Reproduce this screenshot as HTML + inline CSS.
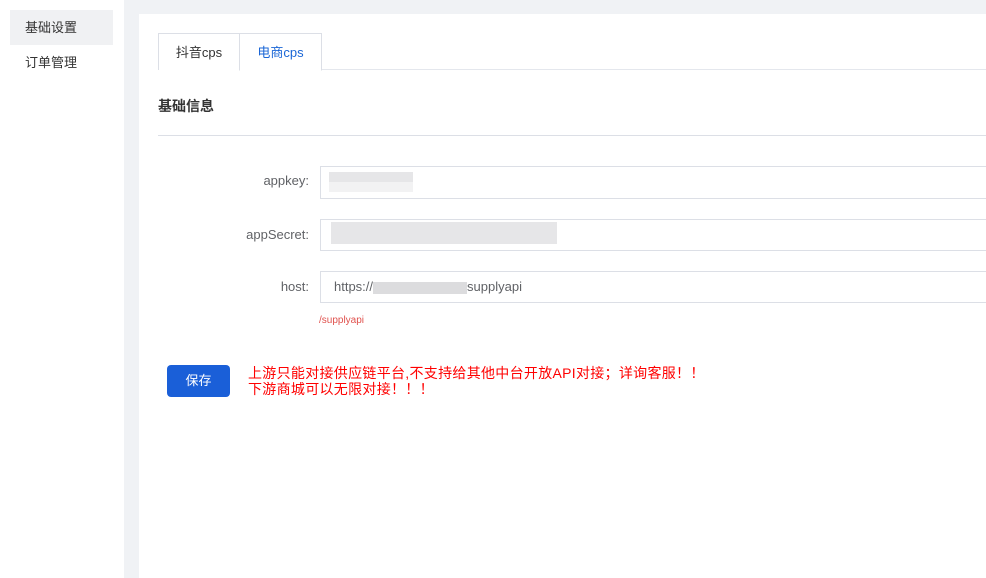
<!DOCTYPE html>
<html><head><meta charset="utf-8"><style>
*{margin:0;padding:0;box-sizing:border-box}
body{width:986px;height:578px;overflow:hidden;background:#f0f2f5;font-family:"Liberation Sans","Noto Sans CJK SC",sans-serif;font-size:13px;color:#333;position:relative}
.side{position:absolute;left:0;top:0;width:124px;height:578px;background:#fff}
.mi{position:absolute;left:10px;width:103px;height:35px;line-height:35px;padding-left:15px;font-size:13px;color:#333}
.main{position:absolute;left:139px;top:14px;width:847px;height:564px;background:#fff}
.tab{position:absolute;top:33px;height:37px;line-height:37px;text-align:center;border:1px solid #dcdfe6;font-size:13px}
.pix{position:absolute;background:#e6e6e8}
</style></head><body>
<div class="side">
<div class="mi" style="top:10px;background:#f0f1f3">基础设置</div>
<div class="mi" style="top:45px">订单管理</div>
</div>
<div class="main"></div>
<div style="position:absolute;left:158px;top:69px;width:828px;border-top:1px solid #e4e7ed"></div>
<div class="tab" style="left:158px;width:82px;border-bottom:none;color:#333;background:#fff">抖音cps</div>
<div class="tab" style="left:239px;width:83px;border-bottom:1px solid #fff;color:#1a66d6;background:#fff;height:38px">电商cps</div>
<div style="position:absolute;left:158px;top:96px;font-size:14px;font-weight:bold;color:#333">基础信息</div>
<div style="position:absolute;left:158px;top:135px;width:828px;border-top:1px solid #dcdfe6"></div>

<div style="position:absolute;left:150px;top:173px;width:159px;text-align:right;color:#606266">appkey:</div>
<div style="position:absolute;left:320px;top:166px;width:680px;height:33px;border:1px solid #dcdfe6"></div>
<div class="pix" style="left:329px;top:172px;width:84px;height:10px"></div>
<div class="pix" style="left:329px;top:182px;width:84px;height:10px;background:#f2f2f3"></div>

<div style="position:absolute;left:150px;top:227px;width:159px;text-align:right;color:#606266">appSecret:</div>
<div style="position:absolute;left:320px;top:219px;width:680px;height:32px;border:1px solid #dcdfe6"></div>
<div class="pix" style="left:331px;top:222px;width:226px;height:22px"></div>

<div style="position:absolute;left:150px;top:279px;width:159px;text-align:right;color:#606266">host:</div>
<div style="position:absolute;left:320px;top:271px;width:680px;height:32px;border:1px solid #dcdfe6"></div>
<div style="position:absolute;left:334px;top:279px;color:#606266">https://<span style="display:inline-block;width:94px;height:12px;background:#dcdcde;vertical-align:middle"></span>supplyapi</div>
<div style="position:absolute;left:319px;top:315px;font-size:10px;color:#e0524e">/supplyapi</div>

<div style="position:absolute;left:167px;top:365px;width:63px;height:32px;background:#1a5fd8;border-radius:4px;color:#fff;text-align:center;line-height:32px;font-size:13px">保存</div>
<div style="position:absolute;left:248px;top:365px;color:#f00;font-size:14px;line-height:16px;letter-spacing:0.3px">上游只能对接供应链平台,不支持给其他中台开放API对接；详询客服！！<br>下游商城可以无限对接！！！</div>
</body></html>
